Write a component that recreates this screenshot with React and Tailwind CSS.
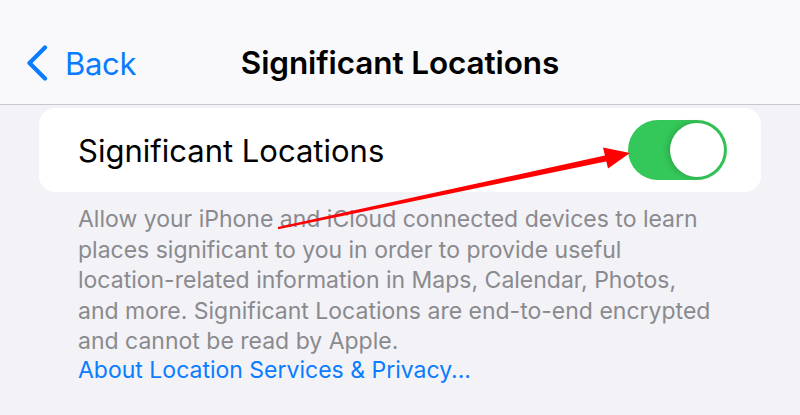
export default function App() {
  return (
    <div
      className="relative w-[800px] h-[415px] overflow-hidden bg-[#f2f2f7] text-black"
      style={{ fontFamily: "Inter, 'Liberation Sans', sans-serif" }}
    >
      {/* NAV BAR */}
      <div className="relative h-[105px] bg-[#f9f9fb] border-b border-[#c8c8cc] flex items-center pt-[22px]">
        <div className="flex items-center pl-[26px] text-[#0a7cff]">
          <svg width="22" height="36" viewBox="0 0 22 36" fill="none">
            <path d="M19 2.5 L3.5 18 L19 33.5" stroke="#0a7cff" strokeWidth="4.2" strokeLinecap="round" strokeLinejoin="round" />
          </svg>
          <span className="ml-[17px] text-[31px] leading-none tracking-[-0.3px]">Back</span>
        </div>
        <div className="absolute left-0 right-0 top-[22px] bottom-0 flex items-center justify-center pointer-events-none">
          <span className="text-[31.5px] font-semibold leading-none tracking-[-0.1px]">Significant Locations</span>
        </div>
      </div>

      {/* CONTENT */}
      <div className="px-[39px] pt-[3px]">
        <div className="h-[84px] bg-white rounded-[16px] flex items-center justify-between pl-[39px] pr-[34px]">
          <span className="text-[31px] leading-none tracking-[0px]">Significant Locations</span>
          <div className="w-[99px] h-[60px] rounded-full bg-[#34c759] flex items-center justify-end pr-[3px]">
            <div className="w-[54px] h-[54px] rounded-full bg-white shadow-[-2px_0_6px_rgba(0,0,0,0.18)]" />
          </div>
        </div>

        <div className="pl-[39px] pr-[10px] pt-[12px] text-[23px] leading-[30.5px] text-[#8a8a8e] tracking-[0px]">
          <p>
            Allow your iPhone and iCloud connected devices to learn
            <br />
            places significant to you in order to provide useful
            <br />
            location-related information in Maps, Calendar, Photos,
            <br />
            and more. Significant Locations are end-to-end encrypted
            <br />
            and cannot be read by Apple.
          </p>
          <p className="text-[#0a7cff] leading-[27px]">About Location Services &amp; Privacy...</p>
        </div>
      </div>

      {/* ANNOTATION ARROW */}
      <svg className="absolute inset-0 pointer-events-none" width="800" height="415" viewBox="0 0 800 415">
        <polygon points="277.8,227 278.2,229.2 610.6,160.4 609.4,154.6" fill="#ff0000" />
        <polygon points="603,147.5 630,153 608,168.5" fill="#ff0000" />
      </svg>
    </div>
  );
}
